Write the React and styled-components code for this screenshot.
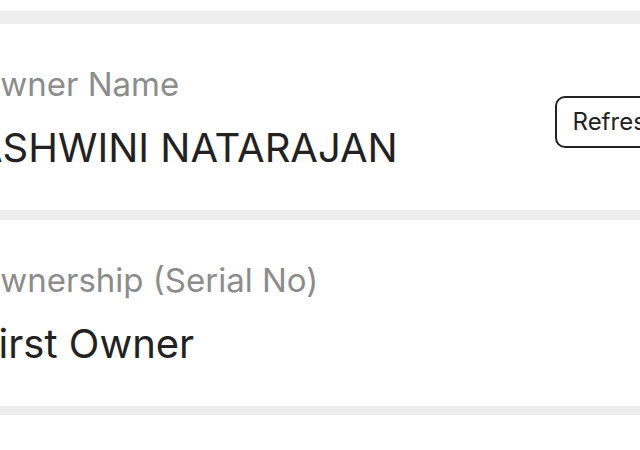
import React from "react";
import styled, { createGlobalStyle } from "styled-components";

const GlobalStyle = createGlobalStyle`
  html, body {
    margin: 0;
    padding: 0;
    background: #ffffff;
    overflow: hidden;
  }
  body {
    font-family: Inter, "Noto Sans", "Liberation Sans", sans-serif;
  }
`;

const Page = styled.div`
  width: 640px;
  height: 450px;
  overflow: hidden;
  padding-top: 11px;
  box-sizing: border-box;
`;

const List = styled.div`
  display: flex;
  flex-direction: column;
  gap: 10px;
  padding: 13px 0 9px;
  background: #ededed;
`;

const Card = styled.div`
  display: flex;
  align-items: center;
  justify-content: space-between;
  height: 186px;
  box-sizing: border-box;
  background: #ffffff;
  margin: 0 -38px 0 -25px;
`;

const Info = styled.div`
  display: flex;
  flex-direction: column;
  gap: 19px;
  align-self: flex-start;
  padding-top: 40px;
`;

const Label = styled.div`
  font-size: 33px;
  line-height: 40px;
  color: #8c8c8c;
`;

const Value = styled.div`
  font-size: 40px;
  line-height: 50px;
  color: #222222;
`;

const RefreshButton = styled.button`
  margin-top: 10px;
  height: 52px;
  padding: 0 16px;
  border: 2px solid #222222;
  border-radius: 10px;
  background: #ffffff;
  color: #222222;
  font-family: inherit;
  font-size: 24px;
  line-height: 1;
`;

const records = [
  { label: "Owner Name", value: "ASHWINI NATARAJAN", action: "Refresh" },
  { label: "Ownership (Serial No)", value: "First Owner" },
];

export default function App() {
  return (
    <>
      <GlobalStyle />
      <Page>
        <List>
          {records.map((r) => (
            <Card key={r.label}>
              <Info>
                <Label>{r.label}</Label>
                <Value>{r.value}</Value>
              </Info>
              {r.action && <RefreshButton>{r.action}</RefreshButton>}
            </Card>
          ))}
        </List>
      </Page>
    </>
  );
}
